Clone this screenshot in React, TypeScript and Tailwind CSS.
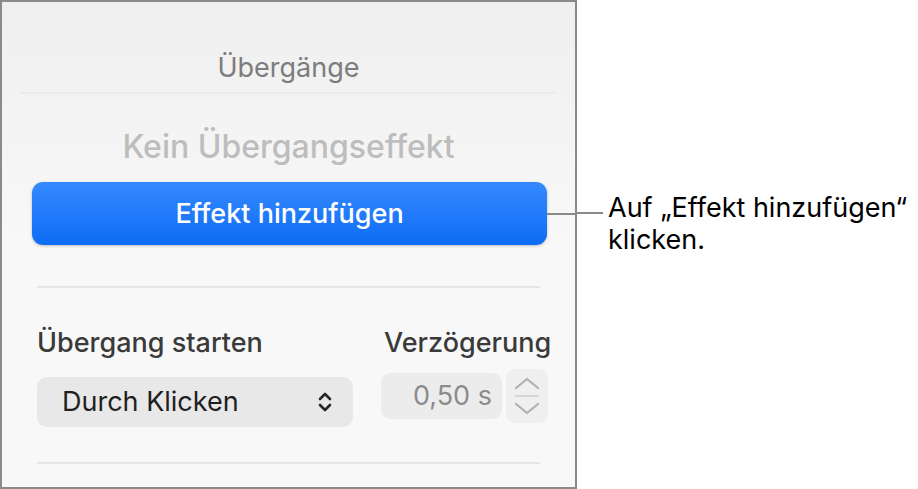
import React from 'react'

const font = { fontFamily: 'Inter, "Noto Sans", "Liberation Sans", sans-serif' }

function UpDownChevron() {
  return (
    <svg width="16" height="24" viewBox="0 0 16 24" fill="none">
      <path d="M3 9L8 4L13 9" stroke="#262626" strokeWidth="2.6" strokeLinecap="round" strokeLinejoin="round" />
      <path d="M3 15L8 20L13 15" stroke="#262626" strokeWidth="2.6" strokeLinecap="round" strokeLinejoin="round" />
    </svg>
  )
}

function Stepper() {
  return (
    <div className="flex h-[54px] w-[42px] shrink-0 flex-col items-center justify-center rounded-[9px] bg-[#efefef]">
      <svg width="32" height="48" viewBox="0 0 32 48" fill="none">
        <path d="M5 16L16 7L27 16" stroke="#b0b0b0" strokeWidth="2.2" strokeLinecap="round" strokeLinejoin="round" />
        <path d="M4 24H28" stroke="#cccccc" strokeWidth="1.5" />
        <path d="M5 32L16 41L27 32" stroke="#b0b0b0" strokeWidth="2.2" strokeLinecap="round" strokeLinejoin="round" />
      </svg>
    </div>
  )
}

export default function App() {
  return (
    <div className="flex h-[489px] w-[918px] bg-white" style={font}>
      {/* inspector panel */}
      <div className="flex h-[489px] w-[577px] shrink-0 flex-col border-2 border-[#8a8a8a] bg-gradient-to-b from-[#efefef] via-[#f8f8f8] to-[#f8f8f8]">
        <div className="flex h-[90px] items-end justify-center pb-[8px]">
          <span className="text-[27px] leading-[32px] text-[#7d7d7d]">Übergänge</span>
        </div>
        <div className="mx-[18px] h-[2px] bg-[#ebebeb]" />

        <div className="mt-[36px] flex justify-center">
          <span className="text-[32px] font-medium leading-[34px] text-[#bdbdbd]">Kein Übergangseffekt</span>
        </div>

        <div className="mt-[18px] flex items-center pl-[30px]">
          <button className="flex h-[63px] w-[515px] shrink-0 items-center justify-center rounded-[11px] bg-gradient-to-b from-[#3489ff] to-[#0b6cf4] shadow-[0_1px_3px_rgba(0,0,0,0.25)]">
            <span className="text-[27px] font-medium leading-[32px] text-white">Effekt hinzufügen</span>
          </button>
          <div className="h-[2px] flex-1 bg-[#8a8a8a]" />
        </div>

        <div className="mx-[35px] mt-[41px] h-[2px] bg-[#e6e6e6]" />

        <div className="mt-[39px] flex px-[35px]">
          <div className="flex w-[316px] shrink-0 flex-col">
            <span className="text-[27px] font-medium leading-[32px] text-[#3a3a3a]">Übergang starten</span>
            <div className="mt-[18px] flex h-[50px] items-center justify-between rounded-[10px] bg-[#e8e8e8] pl-[25px] pr-[20px]">
              <span className="text-[27px] leading-[32px] text-[#1f1f1f]">Durch Klicken</span>
              <UpDownChevron />
            </div>
          </div>
          <div className="ml-[28px] flex shrink-0 flex-col">
            <span className="pl-[3px] text-[27px] font-medium leading-[32px] text-[#3a3a3a]">Verzögerung</span>
            <div className="mt-[10px] flex items-center gap-[4px]">
              <div className="flex h-[46px] w-[121px] shrink-0 items-center justify-end rounded-[9px] bg-[#ececec] pr-[10px]">
                <span className="text-[27px] leading-[32px] text-[#8c8c8c]">0,50 s</span>
              </div>
              <Stepper />
            </div>
          </div>
        </div>

        <div className="mx-[35px] mt-[35px] h-[2px] bg-[#e6e6e6]" />
      </div>

      {/* callout */}
      <div className="flex flex-col pt-[192px]">
        <div className="flex items-start">
          <div className="mt-[20px] h-[2px] w-[26px] bg-[#8a8a8a]" />
          <div className="ml-[5px] text-[27px] leading-[32px] text-black">
            <div>Auf „Effekt hinzufügen“</div>
            <div>klicken.</div>
          </div>
        </div>
      </div>
    </div>
  )
}
